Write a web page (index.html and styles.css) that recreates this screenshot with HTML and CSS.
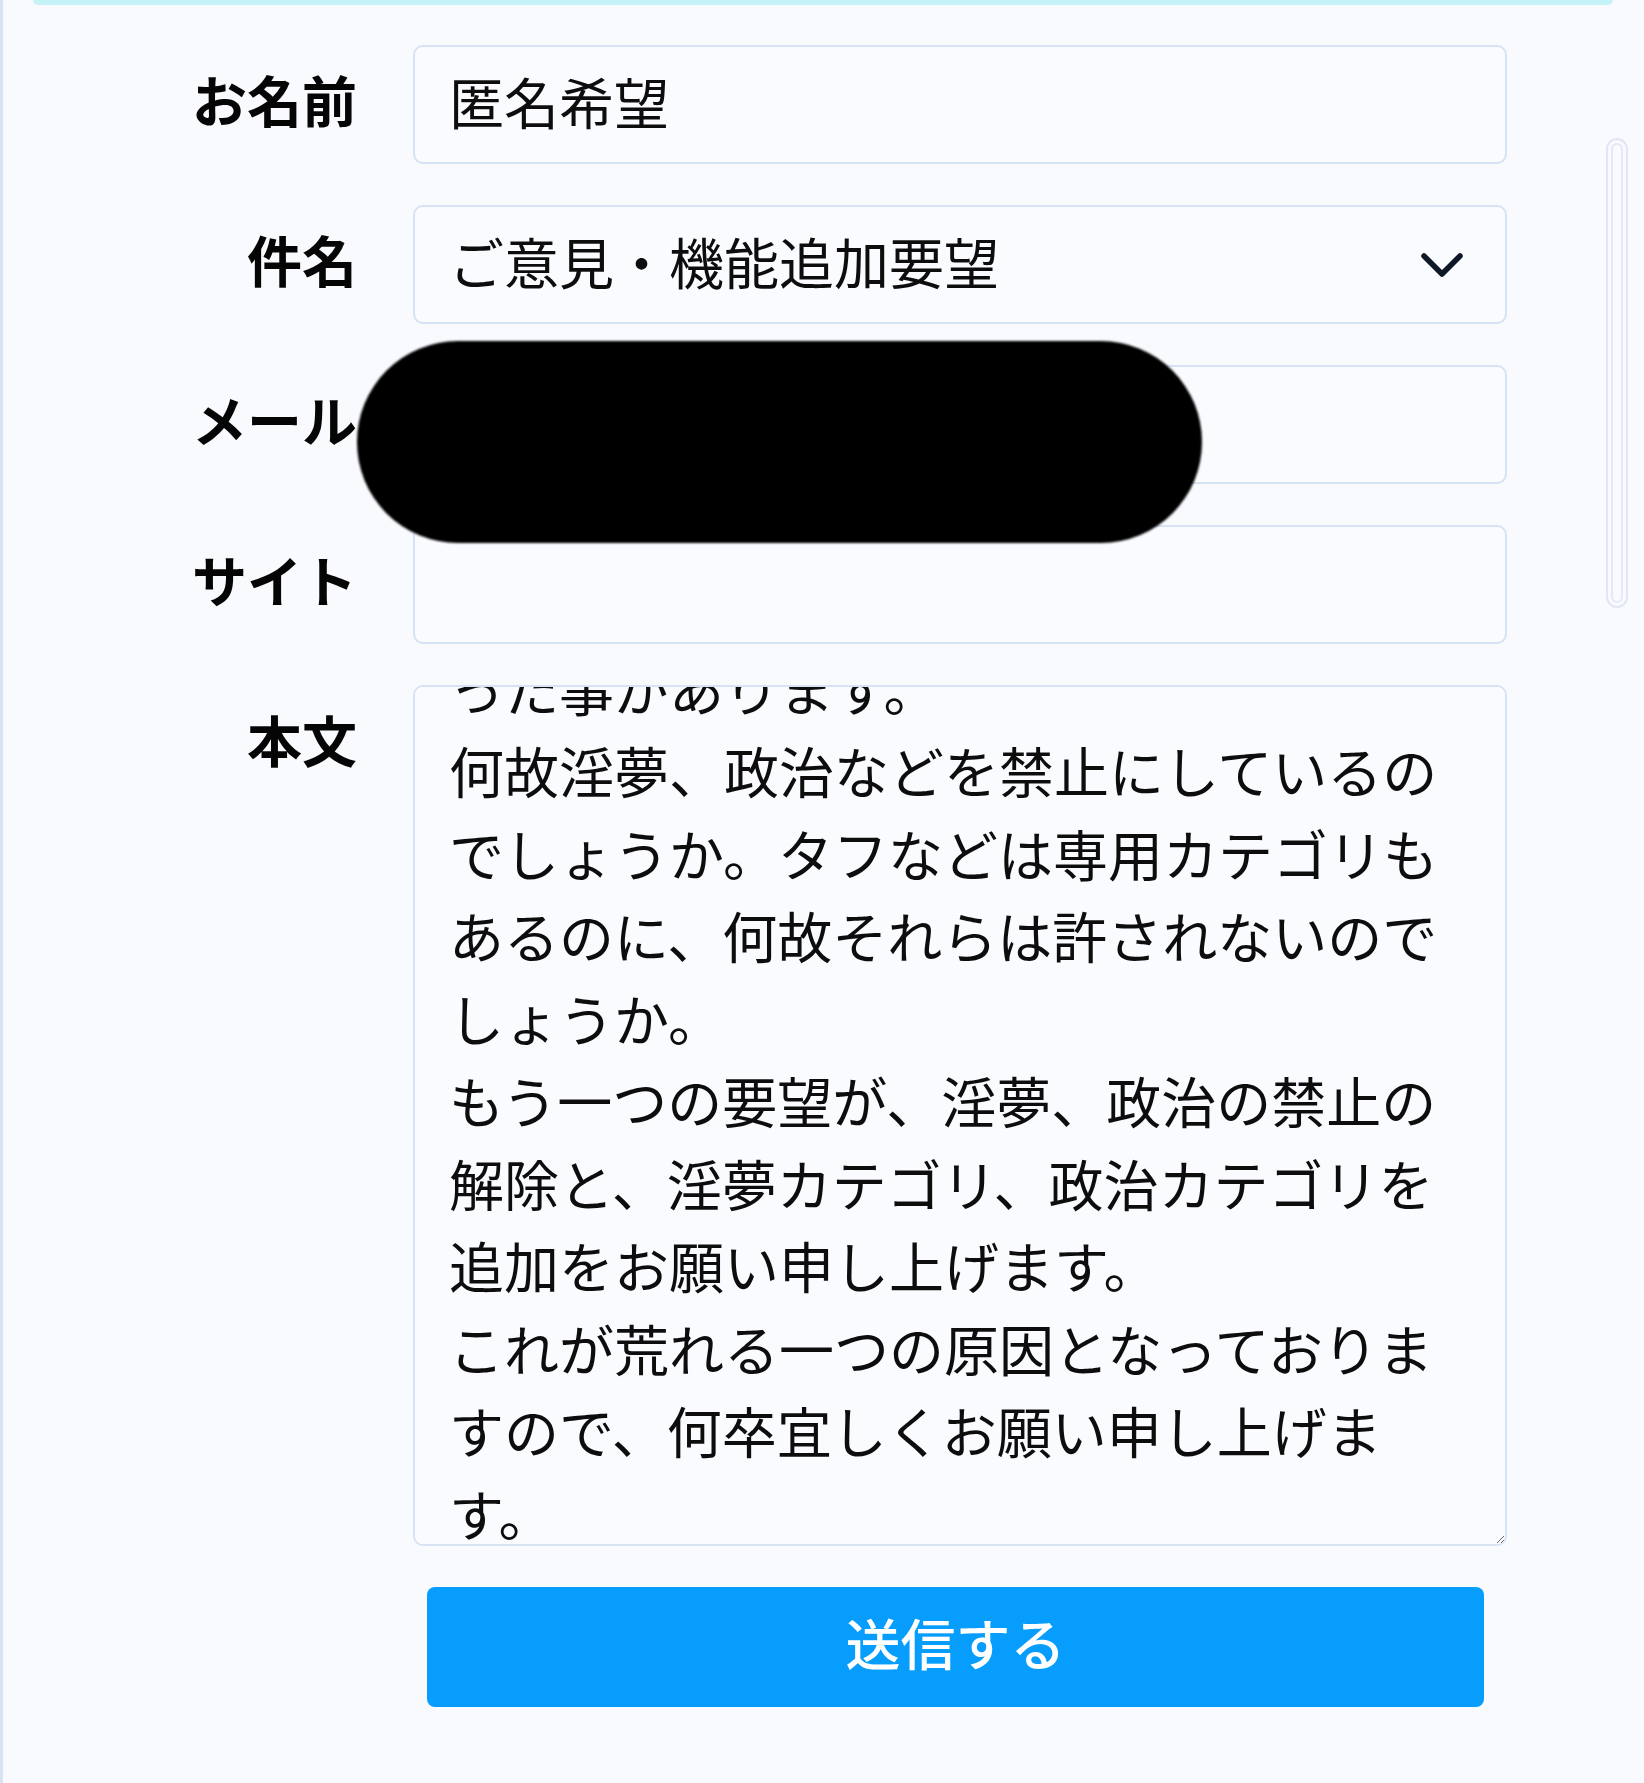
FILE: index.html
```html
<!DOCTYPE html>
<html lang="ja">
<head>
<meta charset="utf-8">
<title>お問い合わせ</title>
<link rel="stylesheet" href="styles.css">
</head>
<body>
<div class="page">
  <div class="topbar"></div>
  <form class="form">
    <label class="label" for="name">お名前</label>
    <input class="field" id="name" type="text" value="匿名希望">

    <label class="label" for="subject">件名</label>
    <div class="select-wrap">
      <select class="field select" id="subject">
        <option>ご意見・機能追加要望</option>
      </select>
      <svg class="chevron" viewBox="0 0 44 28" width="44" height="28" aria-hidden="true">
        <path d="M4 5 L22 23 L40 5" fill="none" stroke="#0f1826" stroke-width="5.5" stroke-linecap="round" stroke-linejoin="round"/>
      </svg>
    </div>

    <label class="label" for="mail">メール</label>
    <input class="field" id="mail" type="email">

    <label class="label" for="site">サイト</label>
    <input class="field" id="site" type="text">

    <label class="label" for="body">本文</label>
    <textarea class="field body-field" id="body">以前から掲示板を利用していて、気にな
った事があります。
何故淫夢、政治などを禁止にしているのでしょうか。タフなどは専用カテゴリもあるのに、何故それらは許されないのでしょうか。
もう一つの要望が、淫夢、政治の禁止の解除と、淫夢カテゴリ、政治カテゴリを追加をお願い申し上げます。
これが荒れる一つの原因となっておりますので、何卒宜しくお願い申し上げます。</textarea>

    <div class="actions">
      <button class="submit" type="button">送信する</button>
    </div>
  </form>
  <div class="redaction"></div>
  <div class="scroll-thumb"><div class="scroll-inner"></div></div>
</div>
<script src="script.js"></script>
</body>
</html>
```

FILE: styles.css
```css
html, body {
  margin: 0;
  padding: 0;
  background: #f8fafd;
}

body {
  font-family: "Noto Sans CJK JP", "Noto Sans", sans-serif;
  color: #0a0a0a;
}

.page {
  position: relative;
  min-height: 1783px;
  box-sizing: border-box;
  border-left: 3px solid #d9e2f3;
  overflow: hidden;
}

.topbar {
  margin-left: 30px;
  width: 1580px;
  height: 5px;
  background: #c6f3f8;
  border-radius: 0 0 6px 6px;
}

.form {
  display: grid;
  grid-template-columns: 354px 1094px;
  column-gap: 56px;
  row-gap: 41px;
  margin-top: 40px;
  align-items: start;
}

.label {
  height: 119px;
  display: flex;
  align-items: center;
  justify-content: flex-end;
  font-size: 55px;
  font-weight: 700;
  line-height: 1;
  padding-bottom: 12px;
  box-sizing: border-box;
  color: #050505;
}

.field {
  display: block;
  box-sizing: border-box;
  width: 1094px;
  height: 119px;
  margin: 0;
  padding: 0 34px 9px;
  border: 2px solid #d5e3f5;
  border-radius: 10px;
  background: #f9fbfe;
  font-family: "Noto Sans CJK JP", "Noto Sans", sans-serif;
  font-size: 55px;
  color: #0d0d0d;
  outline: none;
}

.select-wrap {
  position: relative;
}

.select {
  appearance: none;
  -webkit-appearance: none;
}

.chevron {
  position: absolute;
  right: 43px;
  top: 46px;
  pointer-events: none;
}

.body-field {
  height: 861px;
  padding: 20px 34px;
  line-height: 1.5;
  resize: both;
  overflow-y: scroll;
  scrollbar-width: none;
  line-break: loose;
  white-space: pre-wrap;
}

.body-field::-webkit-scrollbar {
  display: none;
}

.actions {
  grid-column: 2;
  display: flex;
}

.submit {
  margin-left: 14px;
  width: 1057px;
  height: 120px;
  border: none;
  border-radius: 8px;
  background: #079dfc;
  color: #ffffff;
  font-family: "Noto Sans CJK JP", "Noto Sans", sans-serif;
  font-size: 55px;
  font-weight: 500;
  padding: 0 0 12px;
}

.redaction {
  position: absolute;
  left: 354px;
  top: 341px;
  width: 845px;
  height: 202px;
  background: #000;
  border-radius: 101px;
  filter: blur(1px);
}

.scroll-thumb {
  position: absolute;
  left: 1603px;
  top: 138px;
  width: 22px;
  height: 470px;
  box-sizing: border-box;
  border: 2px solid #e1e6f6;
  border-radius: 11px;
  padding: 3px;
}

.scroll-inner {
  height: 100%;
  box-sizing: border-box;
  border: 2px solid #e4e8f7;
  border-radius: 7px;
}
```

FILE: script.js
```js
var body = document.querySelector('.body-field');
body.scrollTop = 144;
```
